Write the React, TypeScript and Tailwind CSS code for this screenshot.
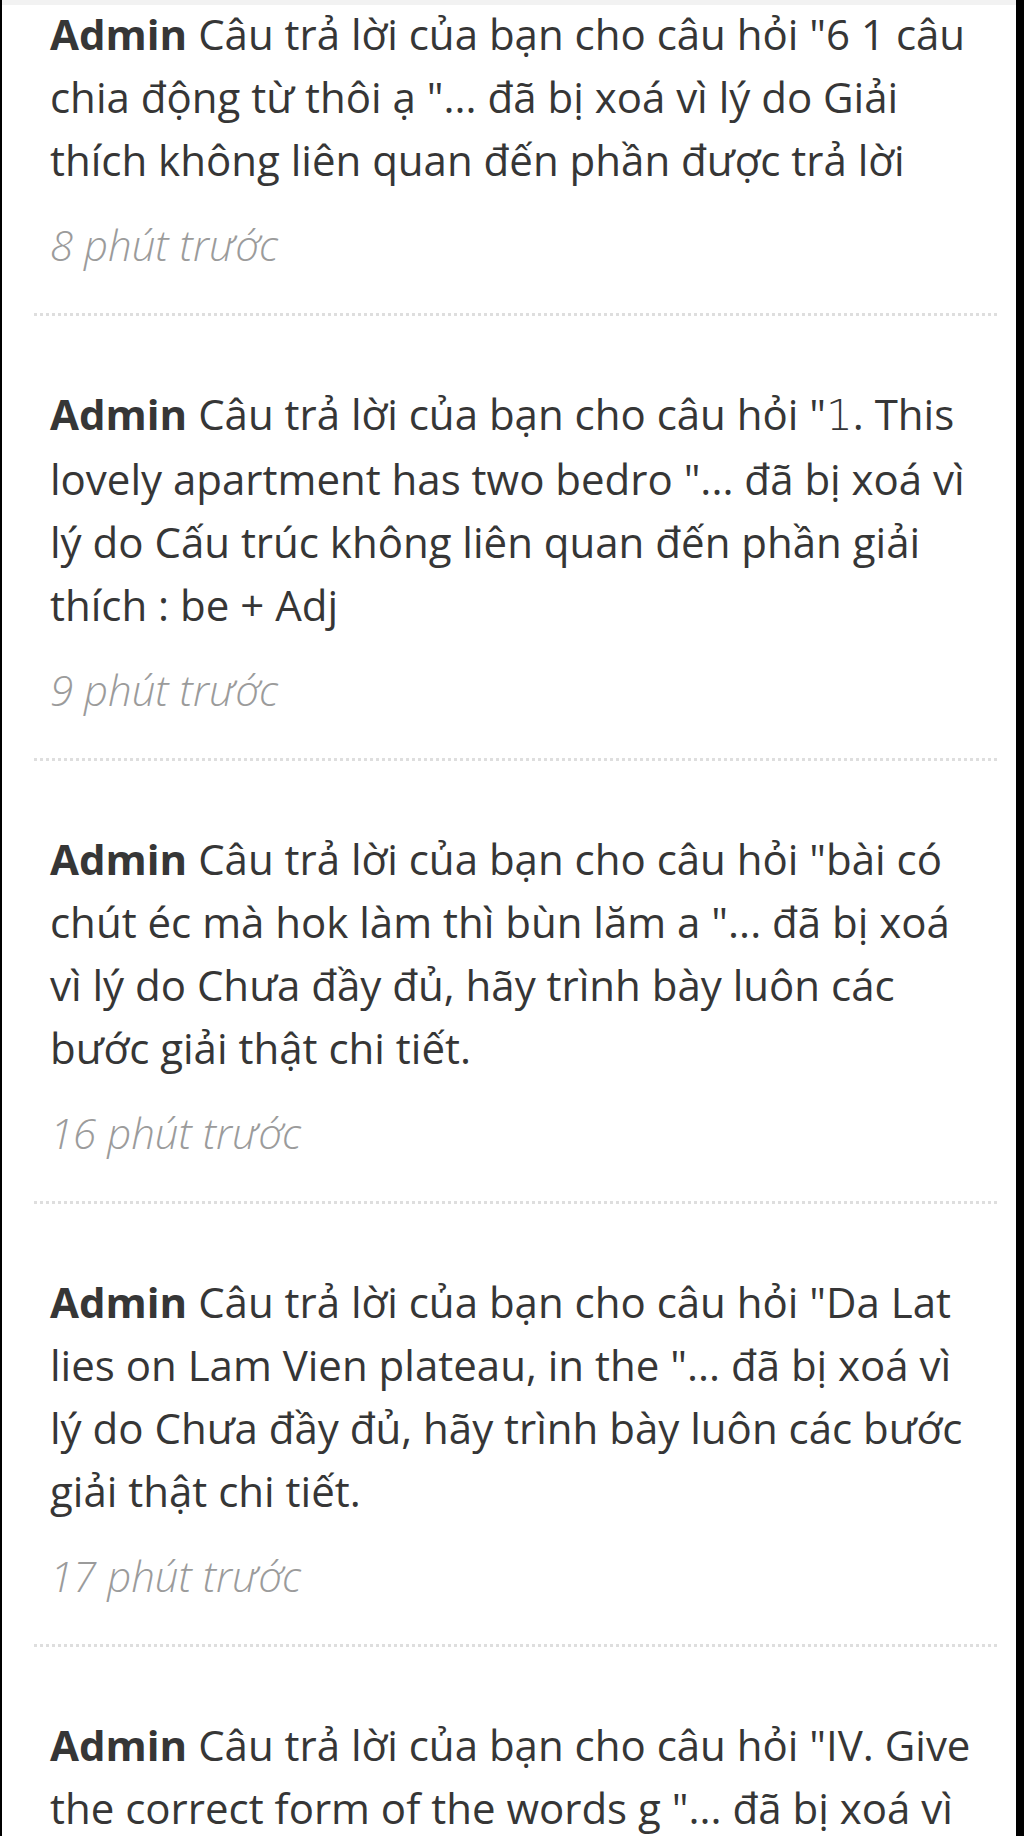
import { FC, ReactNode } from 'react'

interface NoticeProps {
  body: ReactNode
  time: string
  first?: boolean
}

const Notice: FC<NoticeProps> = ({ body, time, first }) => {
  return (
    <div className={first ? 'pt-0' : 'pt-[66px]'}>
      {/* Message */}
      <p className="pl-[48px] pr-[28px] text-[42px] leading-[63px] text-[#363636]">
        <span className="font-bold">Admin</span> {body}
      </p>

      {/* Time */}
      <p className="pl-[48px] mt-[28px] text-[42px] leading-[52px] italic font-light text-[#9b9b9b]">
        {time}
      </p>

      {/* Dotted divider */}
      <div className="mt-[42px] ml-[32px] mr-[19px] border-t-[3px] border-dotted border-[#dedede]"></div>
    </div>
  )
}

export default function App() {
  return (
    <div
      className="h-[1836px] overflow-hidden bg-white border-l-2 border-r-8 border-black"
      style={{ fontFamily: '"Open Sans", "Noto Sans", sans-serif' }}
    >
      <div className="h-[5px] bg-[#f2f2f2]"></div>
      <div className="-mt-[3px]">
        <Notice
          first
          body={<>Câu trả lời của bạn cho câu hỏi "6 1 câu chia động từ thôi ạ "... đã bị xoá vì lý do Giải thích không liên quan đến phần được trả lời</>}
          time="8 phút trước"
        />
        <Notice
          body={
            <>
              Câu trả lời của bạn cho câu hỏi "<span style={{ fontFamily: '"DejaVu Sans", sans-serif' }} className="font-light">1</span>. This lovely apartment has two bedro "... đã bị xoá vì lý do Cấu trúc không liên quan đến phần giải thích : be + Adj
            </>
          }
          time="9 phút trước"
        />
        <Notice
          body={<>Câu trả lời của bạn cho câu hỏi "bài có chút éc mà hok làm thì bùn lăm a "... đã bị xoá vì lý do Chưa đầy đủ, hãy trình bày luôn các bước giải thật chi tiết.</>}
          time="16 phút trước"
        />
        <Notice
          body={<>Câu trả lời của bạn cho câu hỏi "Da Lat lies on Lam Vien plateau, in the "... đã bị xoá vì lý do Chưa đầy đủ, hãy trình bày luôn các bước giải thật chi tiết.</>}
          time="17 phút trước"
        />
        <Notice
          body={<>Câu trả lời của bạn cho câu hỏi "IV. Give the correct form of the words g "... đã bị xoá vì lý do Chưa đầy đủ, hãy trình bày luôn các bước giải thật chi tiết.</>}
          time="18 phút trước"
        />
      </div>
    </div>
  )
}
